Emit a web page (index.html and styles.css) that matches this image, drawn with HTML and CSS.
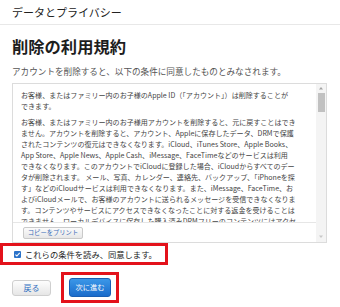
FILE: index.html
```html
<!DOCTYPE html>
<html lang="ja">
<head>
<meta charset="utf-8">
<link rel="stylesheet" href="styles.css">
</head>
<body>
<div class="header">データとプライバシー</div>
<div class="main">
  <h1 class="title">削除の利用規約</h1>
  <p class="subtitle">アカウントを削除すると、以下の条件に同意したものとみなされます。</p>
  <div class="terms">
    <div class="terms-left">
      <div class="terms-text">
        <p class="para">
          <span class="ln">お客様、またはファミリー内のお子様のApple ID（「アカウント」）は削除することが</span>
          <span class="ln">できます。</span>
        </p>
        <p class="para">
          <span class="ln">お客様、またはファミリー内のお子様用アカウントを削除すると、元に戻すことはでき</span>
          <span class="ln">ません。アカウントを削除すると、アカウント、Appleに保存したデータ、DRMで保護</span>
          <span class="ln">されたコンテンツの復元はできなくなります。iCloud、iTunes Store、Apple Books、</span>
          <span class="ln">App Store、Apple News、Apple Cash、iMessage、FaceTimeなどのサービスは利用</span>
          <span class="ln">できなくなります。このアカウントでiCloudに登録した場合、iCloudからすべてのデー</span>
          <span class="ln">タが削除されます。 メール、写真、カレンダー、連絡先、バックアップ、「iPhoneを探</span>
          <span class="ln">す」などのiCloudサービスは利用できなくなります。また、iMessage、FaceTime、お</span>
          <span class="ln">よびiCloudメールで、お客様のアカウントに送られるメッセージを受信できなくなりま</span>
          <span class="ln">す。コンテンツやサービスにアクセスできなくなったことに対する返金を受けることは</span>
          <span class="ln">できません。ローカルデバイスに保存した購入済みDRMフリーのコンテンツにはアクセ</span>
        </p>
      </div>
      <div class="terms-footer">
        <button class="print-btn">コピーをプリント</button>
      </div>
    </div>
    <div class="scrollbar">
      <svg class="arrow" width="10" height="8" viewBox="0 0 10 8"><path d="M3 5.5 L5 3 L7 5.5 Z" fill="#a3a3a3"/></svg>
      <div class="thumb"></div>
      <div class="track-fill"></div>
      <svg class="arrow" width="10" height="8" viewBox="0 0 10 8"><path d="M3 2.5 L5 5 L7 2.5 Z" fill="#c8c8c8"/></svg>
    </div>
  </div>
  <label class="agree">
    <span class="checkbox"><svg width="7" height="7" viewBox="0 0 7 7"><path d="M1.4 3.6 L2.9 5 L5.7 1.9" fill="none" stroke="#fff" stroke-width="1.1"/></svg></span>
    <span class="agree-text">これらの条件を読み、同意します。</span>
  </label>
  <div class="actions">
    <button class="btn btn-back">戻る</button>
    <div class="highlight">
      <button class="btn btn-next">次に進む</button>
    </div>
  </div>
</div>
</body>
</html>
```
FILE: styles.css
```css
* { box-sizing: border-box; }
html, body { margin: 0; padding: 0; background: #fff; }
body {
  font-family: "Noto Sans CJK JP", "Noto Sans", sans-serif;
  color: #222;
  width: 340px;
  height: 307px;
  overflow: hidden;
}
.header {
  height: 25px;
  line-height: 24px;
  padding-left: 12px;
  font-size: 11px;
  color: #222;
  border-bottom: 1px solid #e8e8e8;
}
.main {
  padding: 0 13px 0 12px;
}
.title {
  margin: 11px 0 0 0;
  font-size: 16.3px;
  line-height: 20px;
  font-weight: bold;
  color: #1d1d1d;
}
.subtitle {
  margin: 9px 0 0 0;
  font-size: 8.6px;
  line-height: 12px;
  color: #555;
  white-space: nowrap;
}
.terms {
  margin-top: 6px;
  height: 160px;
  border: 1px solid #dcdcdc;
  display: flex;
}
.terms-left {
  flex: 1;
  display: flex;
  flex-direction: column;
  min-width: 0;
}
.terms-text {
  height: 138px;
  overflow: hidden;
  padding: 6px 0 0 8px;
  font-size: 7.05px;
  line-height: 11px;
  color: #444;
}
.para { margin: 0 0 5px 0; }
.ln { display: block; white-space: nowrap; }
.terms-footer {
  flex: 1;
  border-top: 1px solid #e6e6e6;
  padding: 4px 0 0 10px;
}
.print-btn {
  display: block;
  width: 60px;
  height: 12px;
  padding: 0;
  text-align: center;
  font-family: inherit;
  font-size: 6.3px;
  line-height: 10px;
  color: #3a6cb8;
  background: linear-gradient(#fbfbfb, #e7e7e7);
  border: 1px solid #c9c9c9;
  border-radius: 2px;
  white-space: nowrap;
}
.scrollbar {
  width: 10px;
  display: flex;
  flex-direction: column;
  align-items: center;
  background: #f4f4f4;
  padding-bottom: 1px;
}
.arrow { display: block; }
.thumb {
  width: 7px;
  height: 19px;
  margin-top: 1px;
  background: #c1c1c1;
}
.track-fill { flex: 1; }
.agree {
  display: flex;
  align-items: center;
  width: 168px;
  height: 22px;
  margin-left: -12px;
  padding-left: 11px;
  border: 3px solid #e3121b;
}
.checkbox {
  width: 7px;
  height: 7px;
  border-radius: 1px;
  background: #2a72c9;
  display: flex;
}
.checkbox svg { display: block; }
.agree-text {
  margin-left: 4px;
  font-size: 8.3px;
  line-height: 12px;
  color: #222;
  white-space: nowrap;
}
.actions {
  margin-top: 7px;
  display: flex;
  align-items: center;
  gap: 10px;
}
.btn {
  font-family: inherit;
  border-radius: 3px;
  padding: 0;
}
.btn-back {
  width: 39px;
  height: 16px;
  font-size: 8px;
  line-height: 14px;
  color: #2f6fc2;
  background: linear-gradient(#fdfdfd, #e6e6e6);
  border: 1px solid #cfcfcf;
}
.highlight {
  border: 3px solid #e3121b;
  padding: 3px 5px;
  display: flex;
}
.btn-next {
  width: 42px;
  height: 19px;
  font-size: 7.3px;
  line-height: 17px;
  color: #fff;
  background: linear-gradient(#3b97e8, #1a6ccb);
  border: 1px solid #1a5fb3;
}
```
